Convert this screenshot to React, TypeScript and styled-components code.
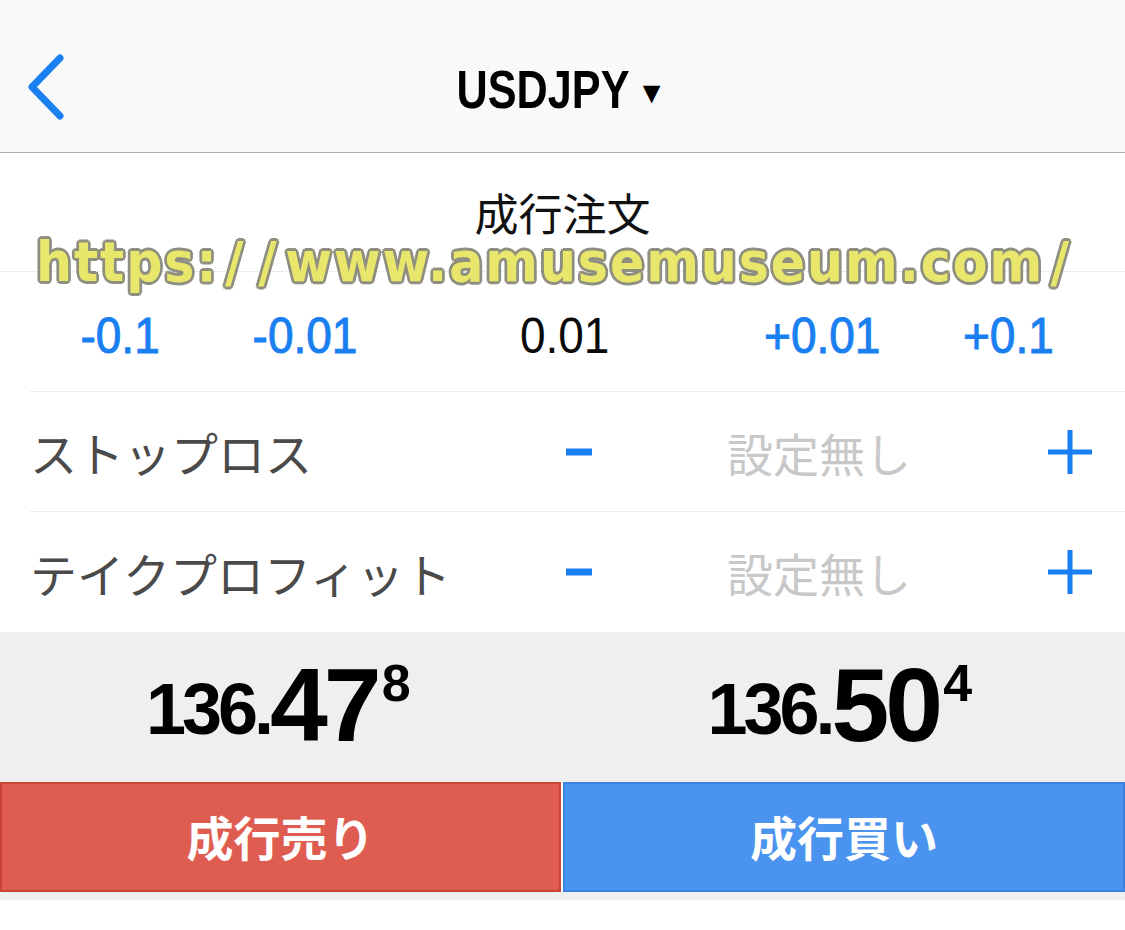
import React from "react";
import styled, { createGlobalStyle } from "styled-components";

const GlobalStyle = createGlobalStyle`
  html, body { margin: 0; padding: 0; background: #ffffff; }
  body { font-family: "Liberation Sans", "Noto Sans CJK JP", sans-serif; }
  * { box-sizing: border-box; }
`;

const JP = `"Noto Sans CJK JP", "Liberation Sans", sans-serif`;
const LAT = `"Liberation Sans", "Noto Sans CJK JP", sans-serif`;
const BLUE = "#1a7ff0";

const Page = styled.div`
  position: relative;
  width: 1125px;
  height: 930px;
  background: #ffffff;
  overflow: hidden;
`;

const Header = styled.header`
  height: 153px;
  background: #f9f9f9;
  border-bottom: 1px solid #ababab;
  display: grid;
  grid-template-columns: 120px 1fr 120px;
  align-items: center;
  padding-top: 22px;
`;

const BackButton = styled.button`
  border: 0;
  background: transparent;
  padding: 0 0 0 26px;
  display: flex;
  align-items: center;
  cursor: pointer;
`;

const Title = styled.h1`
  margin: 0;
  display: flex;
  justify-content: center;
  align-items: center;
  font-family: ${LAT};
  font-weight: 700;
  font-size: 54px;
  color: #000;
  padding-top: 4px;
  padding-right: 24px;
`;

const Condensed = styled.span<{ $scale?: number }>`
  display: inline-block;
  transform: scaleX(${(p) => p.$scale ?? 0.85});
  transform-origin: center;
`;

const Caret = styled.span`
  font-size: 30px;
  margin-top: 8px;
  margin-left: -14px;
`;

const SectionTitle = styled.div`
  height: 119px;
  border-bottom: 1px solid #ececec;
  display: flex;
  align-items: center;
  justify-content: center;
  font-family: ${JP};
  font-size: 44px;
  font-weight: 400;
  color: #111;
`;

const VolumeRow = styled.div`
  height: 120px;
  margin-left: 30px;
  border-bottom: 1px solid #ececec;
  display: grid;
  grid-template-columns: 180px 190px 330px 184px 188px;
  align-items: center;
  padding-top: 8px;
`;

const Step = styled.span<{ $active?: boolean }>`
  justify-self: center;
  font-family: ${LAT};
  font-size: 50px;
  font-weight: 400;
  color: ${(p) => (p.$active ? "#0a0a0a" : BLUE)};
  ${(p) => (p.$active ? "" : "-webkit-text-stroke: 1px " + BLUE + ";")}
`;

const OptionRow = styled.div<{ $last?: boolean }>`
  height: 120px;
  margin-left: 30px;
  border-bottom: ${(p) => (p.$last ? "0" : "1px solid #ececec")};
  display: grid;
  grid-template-columns: 500px 98px 1fr 110px;
  align-items: center;
`;

const OptionLabel = styled.span`
  font-family: ${JP};
  font-size: 47px;
  color: #4a4a4a;
`;

const IconButton = styled.button`
  border: 0;
  background: transparent;
  padding: 0;
  justify-self: center;
  display: flex;
  align-items: center;
  justify-content: center;
  cursor: pointer;
`;

const OptionValue = styled.span`
  font-family: ${JP};
  font-size: 46px;
  color: #c8c8c8;
  padding-left: 99px;
`;

const PriceBar = styled.div`
  height: 150px;
  background: #efefef;
  display: grid;
  grid-template-columns: 1fr 1fr;
  align-items: start;
`;

const Price = styled.div<{ $shift: number }>`
  display: flex;
  justify-content: center;
  align-items: flex-start;
  font-family: ${LAT};
  font-weight: 700;
  color: #000;
  line-height: 1;
  padding-top: 25px;
  margin-left: ${(p) => p.$shift}px;
`;

const PriceSmall = styled.span`
  font-size: 72px;
  margin-top: 16px;
  letter-spacing: -4px;
`;

const PriceBig = styled.span`
  font-size: 104px;
  letter-spacing: -4px;
  margin-top: -4px;
`;

const PriceSup = styled.span`
  font-size: 52px;
  margin-top: 0px;
  margin-left: 4px;
`;

const ButtonBar = styled.div`
  display: grid;
  grid-template-columns: 561px 1fr;
  gap: 2px;
  height: 110px;
`;

const TradeButton = styled.button<{ $kind: "sell" | "buy" }>`
  border: 2px solid ${(p) => (p.$kind === "sell" ? "#c94337" : "#3d84e2")};
  background: ${(p) => (p.$kind === "sell" ? "#df5d50" : "#4a93ee")};
  color: #fff;
  font-family: ${JP};
  font-weight: 700;
  font-size: 47px;
  display: flex;
  align-items: center;
  justify-content: center;
  padding: 0 0 4px 0;
  cursor: pointer;
`;

const BottomStrip = styled.div`
  height: 8px;
  background: #efefef;
`;

const Watermark = styled.div`
  position: absolute;
  left: 36px;
  top: 230px;
  font-family: "DejaVu Sans", sans-serif;
  font-weight: 700;
  font-size: 55px;
  letter-spacing: 2.1px;
  color: #e9e66c;
  -webkit-text-stroke: 3px #bdbb55;
  text-shadow:
    2px 2px 0 #8f8f80, -2px -2px 0 #8f8f80, 2px -2px 0 #8f8f80, -2px 2px 0 #8f8f80,
    0 3px 0 #8f8f80, 0 -3px 0 #8f8f80, 3px 0 0 #8f8f80, -3px 0 0 #8f8f80;
  paint-order: stroke fill;
  pointer-events: none;
  white-space: nowrap;
  transform: scaleX(0.92);
  transform-origin: left center;
`;

const Slash = styled.span`
  margin: 0 7px;
`;

const Chevron = () => (
  <svg width="44" height="70" viewBox="0 0 44 70">
    <polyline
      points="34,6 6,35 34,64"
      fill="none"
      stroke={BLUE}
      strokeWidth="7"
      strokeLinecap="round"
      strokeLinejoin="round"
    />
  </svg>
);

const MinusIcon = () => (
  <svg width="28" height="10" viewBox="0 0 28 10">
    <rect x="1" y="1.5" width="26" height="7" fill={BLUE} />
  </svg>
);

const PlusIcon = () => (
  <svg width="46" height="46" viewBox="0 0 46 46">
    <rect x="1" y="20.5" width="44" height="5" fill={BLUE} />
    <rect x="20.5" y="1" width="5" height="44" fill={BLUE} />
  </svg>
);

const steps = [
  { label: "-0.1" },
  { label: "-0.01" },
  { label: "0.01", active: true },
  { label: "+0.01" },
  { label: "+0.1" },
];

const options = ["ストップロス", "テイクプロフィット"];

const prices = [
  { base: "136.", big: "47", sup: "8", shift: -6 },
  { base: "136.", big: "50", sup: "4", shift: -8 },
];

export default function App() {
  return (
    <Page>
      <GlobalStyle />
      <Header>
        <BackButton aria-label="back">
          <Chevron />
        </BackButton>
        <Title>
          <Condensed $scale={0.8}>USDJPY</Condensed>
          <Caret>▼</Caret>
        </Title>
        <div />
      </Header>
      <SectionTitle>成行注文</SectionTitle>
      <VolumeRow>
        {steps.map((s) => (
          <Step key={s.label} $active={s.active}>
            <Condensed $scale={0.92}>{s.label}</Condensed>
          </Step>
        ))}
      </VolumeRow>
      {options.map((o, i) => (
        <OptionRow key={o} $last={i === options.length - 1}>
          <OptionLabel>{o}</OptionLabel>
          <IconButton aria-label="minus">
            <MinusIcon />
          </IconButton>
          <OptionValue>設定無し</OptionValue>
          <IconButton aria-label="plus">
            <PlusIcon />
          </IconButton>
        </OptionRow>
      ))}
      <PriceBar>
        {prices.map((p, i) => (
          <Price key={i} $shift={p.shift}>
            <PriceSmall>{p.base}</PriceSmall>
            <PriceBig>{p.big}</PriceBig>
            <PriceSup>{p.sup}</PriceSup>
          </Price>
        ))}
      </PriceBar>
      <ButtonBar>
        <TradeButton $kind="sell">成行売り</TradeButton>
        <TradeButton $kind="buy">成行買い</TradeButton>
      </ButtonBar>
      <BottomStrip />
      <Watermark>
        https:<Slash>/</Slash>
        <Slash>/</Slash>www.amusemuseum.com<Slash>/</Slash>
      </Watermark>
    </Page>
  );
}
